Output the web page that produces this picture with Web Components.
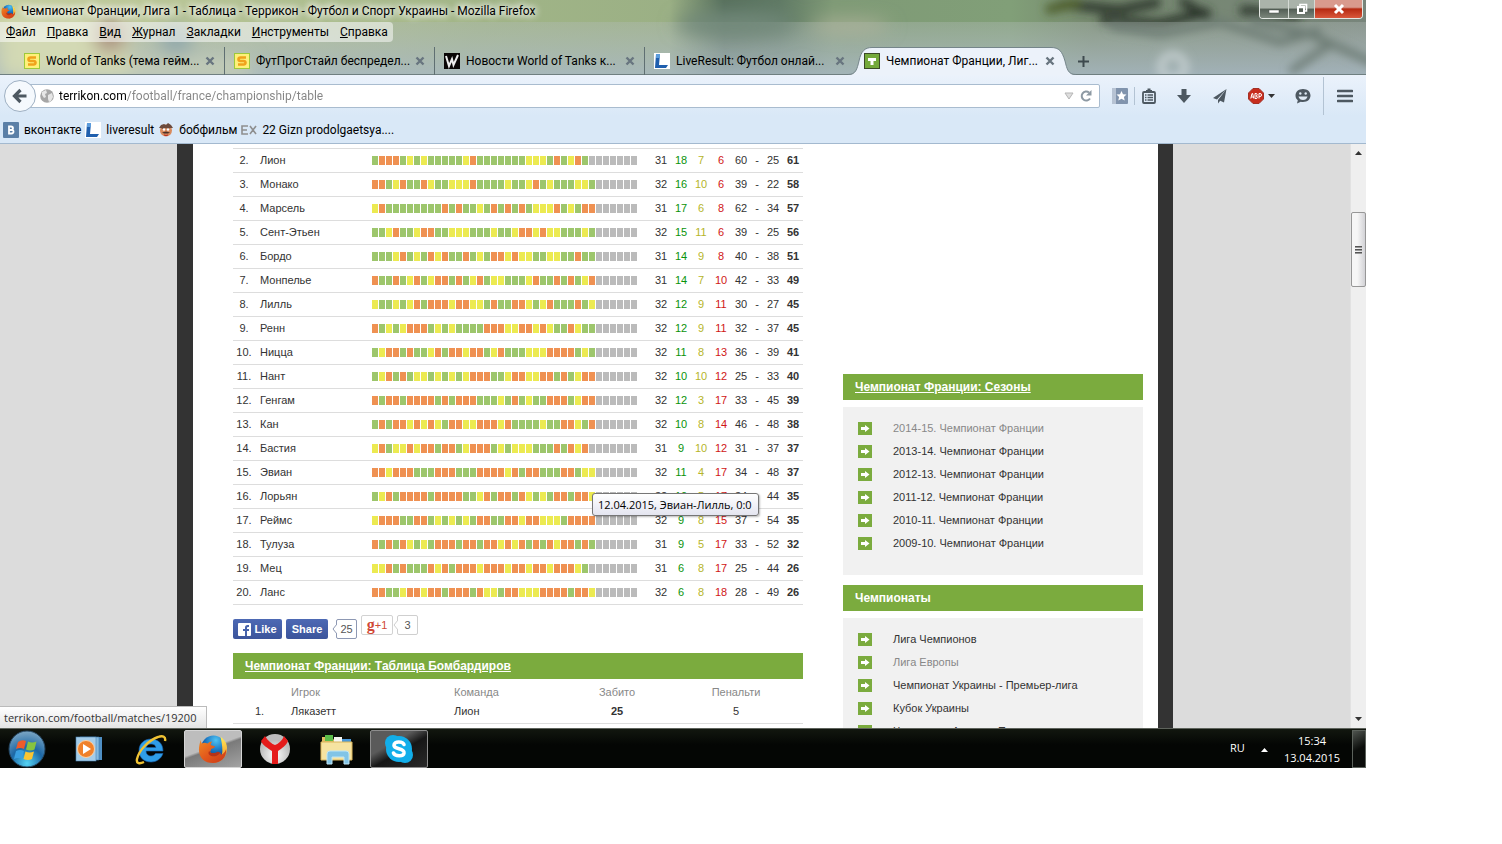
<!DOCTYPE html>
<html lang="ru">
<head>
<meta charset="utf-8">
<title>Чемпионат Франции, Лига 1 - Таблица</title>
<style>
  * { box-sizing: border-box; }
  html { height: 100%; }
  body {
    margin: 0; height: 100%;
    padding: 0 136px 76px 0;
    display: flex; flex-direction: column;
    background: #fff; color: #000; overflow: hidden;
    font: 11px "Liberation Sans", Arial, sans-serif;
    --ui: Roboto, "Open Sans", sans-serif;
    --ui-small: "Open Sans", "Noto Sans", sans-serif;
    --green: #7bab3e;
    --line: #ddd;
  }
  browser-window { flex: 1; min-height: 0; }
</style>
</head>
<body>
  <browser-window>
    <window-title slot="top">Чемпионат Франции, Лига 1 - Таблица - Террикон - Футбол и Спорт Украины - Mozilla Firefox</window-title>
    <menu-bar slot="top"></menu-bar>
    <tab-strip slot="top">
      <browser-tab icon="s">World of Tanks (тема гейм...</browser-tab>
      <browser-tab icon="s">ФутПрогСтайл беспредел...</browser-tab>
      <browser-tab icon="w">Новости World of Tanks к...</browser-tab>
      <browser-tab icon="l" last>LiveResult: Футбол онлай...</browser-tab>
      <browser-tab icon="t" active>Чемпионат Франции, Лиг...</browser-tab>
    </tab-strip>
    <nav-bar slot="bars"></nav-bar>
    <bookmark-bar slot="bars"></bookmark-bar>
    <site-page>
      <league-table></league-table>
      <social-row></social-row>
      <section-title href="#scorers">Чемпионат Франции: Таблица Бомбардиров</section-title>
      <scorer-table></scorer-table>
      <side-panel slot="aside">
        <section-title slot="title" href="#seasons">Чемпионат Франции: Сезоны</section-title>
        <side-link muted>2014-15. Чемпионат Франции</side-link>
        <side-link>2013-14. Чемпионат Франции</side-link>
        <side-link>2012-13. Чемпионат Франции</side-link>
        <side-link>2011-12. Чемпионат Франции</side-link>
        <side-link>2010-11. Чемпионат Франции</side-link>
        <side-link>2009-10. Чемпионат Франции</side-link>
      </side-panel>
      <side-panel slot="aside">
        <section-title slot="title">Чемпионаты</section-title>
        <side-link>Лига Чемпионов</side-link>
        <side-link muted>Лига Европы</side-link>
        <side-link>Чемпионат Украины - Премьер-лига</side-link>
        <side-link>Кубок Украины</side-link>
        <side-link>Чемпионат Англии - Премьер-лига</side-link>
      </side-panel>
    </site-page>
  </browser-window>
  <task-bar></task-bar>

<script>
const svg = (w, h, body, box) =>
  `<svg width="${w}" height="${h}" viewBox="${box || `0 0 ${w} ${h}`}" aria-hidden="true">${body}</svg>`;

const firefox = size => svg(size, size, `
  <defs>
    <radialGradient id="fb" cx=".6" cy=".2" r=".8"><stop offset="0" stop-color="#4fc3f2"/><stop offset=".5" stop-color="#1b78c4"/><stop offset="1" stop-color="#102f6c"/></radialGradient>
    <linearGradient id="fo" x1="0" y1="0" x2="1" y2="1"><stop offset="0" stop-color="#f08a24"/><stop offset=".5" stop-color="#e2571b"/><stop offset="1" stop-color="#c8381a"/></linearGradient>
    <linearGradient id="fy" x1="0" y1="0" x2="0" y2="1"><stop offset="0" stop-color="#ffe95a"/><stop offset="1" stop-color="#f08a1c"/></linearGradient>
  </defs>
  <circle cx="16.5" cy="14.5" r="13" fill="url(#fb)"/>
  <path d="M24 3c6 4 8 10 6.500 16C29 27 22 31 15 31c7-2 11-7 11-13 0-6-1-10-2-15z" fill="url(#fy)"/>
  <path d="M3 6c0 2 .5 3 1 4 2-1 4-1 6 0 2-1 3-2 5-2-1 2-2 3-1 4l4 1c0 2-2 2-4 3 0 2-1 2-1 3 1 3 6 3 9 1 2 0 3 1 2 2 3 0 5-3 6-6 1 9-6 15-14 15C7 31 1 25 1 17c0-4 1-8 2-11z" fill="url(#fo)"/>
  <path d="M12 18c1 3 6 3 9 1 2 0 3 1 2 2-3 3-8 4-11 1-1-1-1-3 0-4z" fill="#b5331a"/>`, '0 0 32 32');

const ICONS = {
  s: svg(16, 16, `<rect x=".5" y=".5" width="15" height="15" fill="#fdf17a" stroke="#9ec93a"/><path d="M12 4.500H6.500Q4.500 4.500 4.500 6.200t2 1.800h3q2 0 2 1.800t-2 1.700H4" fill="none" stroke="#f0a21c" stroke-width="2.600"/>`),
  w: svg(16, 16, `<rect width="16" height="16" fill="#0a0606"/><path d="M2 3l3 10 3-7 1.500 6L14 2" fill="none" stroke="#eee" stroke-width="2"/>`),
  l: svg(16, 16, `<rect width="16" height="16" fill="#fff"/><path d="M2 1h4L5 12h9l-2 3H1z" fill="#1f5fae"/><path d="M2 1h4v4H2z" fill="#5c9cdc"/>`),
  t: svg(16, 16, `<rect width="16" height="16" fill="#3b4a26"/><rect x="1" y="1" width="14" height="14" fill="#74a93a"/><path d="M4 5h8v3H9.500v4h-3V8H4z" fill="#fff"/>`),
  vk: svg(16, 16, `<rect width="16" height="16" rx="1" fill="#5b7fa6"/><path d="M6 4.500v7h2.500q2 0 2-1.900T8 8q2-.2 2-1.800T8 4.500zM6 8h2" fill="none" stroke="#fff" stroke-width="1.800"/>`),
  bob: svg(16, 16, `<circle cx="8" cy="8.500" r="6" fill="#d98a5c"/><path d="M1 6l2-3 3-1 2 1 2-2 3 2 2 3-3 0-2 1-2-1-3 1-2-1z" fill="#6b4a3c"/><path d="M4 10.500l4-1 4 1-2 1H6z" fill="#4a3028"/><circle cx="6" cy="7.500" r="1.200" fill="#fff"/><circle cx="10" cy="7.500" r="1.200" fill="#fff"/><path d="M6 13q2 1 4 0" stroke="#b3261e" fill="none"/>`),
  ex: svg(16, 16, `<path d="M7 4H1v8h6M1 8h5M9 4l6 8M15 4l-6 8" fill="none" stroke="#8e8e8e" stroke-width="1.600"/>`)
};

class Part extends HTMLElement {
  constructor() {
    super();
    this.attachShadow({ mode: 'open' });
  }

  connectedCallback() {
    this.shadowRoot.innerHTML = `
      <style>
        *, :host { box-sizing: border-box; }
        :host { display: block; }
        button { font: inherit; color: inherit; border: 0; padding: 0; background: none; }
        a { color: inherit; text-decoration: none; }
        svg { display: block; flex: none; }
      </style>
      ${this.render()}`;
  }
}

// Окно браузера: стеклянный верх, панели, страница с полосой прокрутки
class BrowserWindow extends Part {
  render() {
    return `
      <style>
        :host { display: flex; flex-direction: column; background: #dcdcdc; }
        .glass { position: relative; background: #a3b0a2; font: 12px var(--ui); }
        .glass > svg { position: absolute; inset: 0; width: 100%; height: 100%; }
        .bars { background: linear-gradient(#ebf2fb, #d9e8f7 60%); border-bottom: 1px solid #a3b9cf; font: 12px var(--ui); }
        .view { position: relative; flex: 1; min-height: 0; display: flex; }
        .page { flex: 1; min-width: 0; overflow: hidden; }
        .status {
          position: absolute; left: 0; bottom: 0; height: 22px; padding: 0 10px 0 4px;
          border: 1px solid #bbb; border-width: 1px 1px 0 0;
          background: linear-gradient(#fff, #e4e4e4); color: #333; font: 11px/21px var(--ui-small);
        }
        .tip {
          position: absolute; left: 592px; top: 349px; height: 23px; padding: 0 6px 0 5px;
          border: 1px solid #767676; border-radius: 3px;
          background: linear-gradient(#fff, #e4e5f0); font: 11px/22px var(--ui-small);
          box-shadow: 1px 1px 2px #0004;
        }
      </style>
      <div class="glass">
        <svg viewBox="0 0 1366 75" preserveAspectRatio="none" aria-hidden="true">
          <defs>
            <filter id="b" x="-20%" y="-50%" width="140%" height="200%"><feGaussianBlur stdDeviation="9"/></filter>
            <filter id="c" x="-20%" y="-50%" width="140%" height="200%"><feGaussianBlur stdDeviation="5"/></filter>
            <linearGradient id="g"><stop offset="0" stop-color="#c6cf9f"/><stop offset=".35" stop-color="#a1b587"/><stop offset=".49" stop-color="#9bb085"/><stop offset=".53" stop-color="#566f5c"/><stop offset=".57" stop-color="#5f7964"/><stop offset=".61" stop-color="#7f9a76"/><stop offset=".74" stop-color="#819f78"/><stop offset=".8" stop-color="#76896f"/><stop offset="1" stop-color="#78857b"/></linearGradient>
            <linearGradient id="h" x2="0" y2="1"><stop offset="0" stop-color="#b3bdba" stop-opacity=".35"/><stop offset="1" stop-color="#a9b9c4" stop-opacity=".85"/></linearGradient>
          </defs>
          <rect width="1366" height="75" fill="url(#g)"/>
          <g filter="url(#c)" fill="none" stroke="#2c352a" stroke-width="9">
            <path d="M1060 4l60 6 40-8M1100 20l60 4 50-12M1180 0l30 18M1240 10l60 6"/>
            <path d="M1046 10l34-8" stroke="#4d5d2b"/>
          </g>
          <rect y="22" width="1366" height="53" fill="url(#h)"/>
          <g filter="url(#b)">
            <rect x="0" y="18" width="130" height="60" fill="#d3d9b4"/>
            <ellipse cx="110" cy="36" rx="16" ry="18" fill="#ab9280"/>
            <ellipse cx="176" cy="42" rx="16" ry="16" fill="#93a9ac"/>
            <rect x="130" y="58" width="120" height="20" fill="#c5cdb6"/>
            <ellipse cx="735" cy="24" rx="60" ry="12" fill="#72897a"/>
            <ellipse cx="850" cy="26" rx="40" ry="6" fill="#b1b49c"/>
          </g>
          <g filter="url(#c)" fill="none" stroke="#6b7972" stroke-width="7">
            <path d="M1110 26l50 8 60-12 60 20 40-12M1250 20l60 14 66 30M1330 44l-40 28"/>
            <circle cx="1173" cy="67" r="12" stroke="#c5cfd0" stroke-width="7"/>
          </g>
          <rect y="74" width="1366" height="1" fill="#6f7f80"/>
        </svg>
        <slot name="top"></slot>
      </div>
      <div class="bars"><slot name="bars"></slot></div>
      <div class="view">
        <div class="page"><slot></slot></div>
        <scroll-track></scroll-track>
        <div class="tip" role="tooltip">12.04.2015, Эвиан-Лилль, 0:0</div>
        <div class="status">terrikon.com/football/matches/19200</div>
      </div>`;
  }
}

class ScrollTrack extends Part {
  render() {
    return `
      <style>
        :host { width: 16px; flex: none; display: flex; flex-direction: column; align-items: center; background: #efefef; border-left: 1px solid #e2e2e2; }
        svg { margin: 6px 0; }
        .gap { height: 50px; }
        .thumb {
          width: 15px; height: 75px; border: 1px solid #979797; border-radius: 2px;
          background: linear-gradient(90deg, #f6f6f6 40%, #d2d2d6);
          display: flex; flex-direction: column; justify-content: center; align-items: center; gap: 1px;
        }
        .thumb i { width: 7px; height: 2px; background: #555; border-bottom: 1px solid #999; }
        .rest { flex: 1; }
      </style>
      ${svg(7, 6, '<path d="M0 5l3.500-4L7 5z" fill="#333"/>')}
      <div class="gap"></div>
      <div class="thumb"><i></i><i></i><i></i></div>
      <div class="rest"></div>
      ${svg(7, 6, '<path d="M0 1h7L3.500 5z" fill="#333"/>')}`;
  }
}

class WindowTitle extends Part {
  render() {
    return `
      <style>
        :host { position: relative; height: 22px; display: flex; align-items: center; padding-left: 1px; }
        .text { margin-left: 5px; white-space: nowrap; text-shadow: 0 0 6px #fff, 0 0 8px #fff, 0 0 10px #fff; }
        .controls { margin: 0 3px 0 auto; align-self: flex-start; display: flex; border: 1px solid #e4e8e4; border-top: 0; border-radius: 0 0 4px 4px; overflow: hidden; }
        button { height: 18px; width: 29px; display: grid; place-items: center; border-right: 1px solid #d5dad5; background: linear-gradient(#aab3aa 45%, #535e55 50%, #7b867c); }
        button.r { width: 26px; }
        button.x { width: 47px; border: 0; background: linear-gradient(#d99a8d 40%, #b62a12 50%, #d9583c); }
      </style>
      ${firefox(15)}
      <span class="text"><slot></slot></span>
      <div class="controls">
        <button aria-label="Свернуть">${svg(12, 12, '<rect x="1" y="7" width="10" height="3" fill="#fff" stroke="#4a524b" stroke-width=".5"/>')}</button>
        <button class="r" aria-label="Развернуть">${svg(12, 12, '<path d="M4 4V1.500h6.500V8H8" fill="none" stroke="#fff" stroke-width="1.600"/><rect x="2" y="4" width="6" height="6" fill="none" stroke="#fff" stroke-width="2"/>')}</button>
        <button class="x" aria-label="Закрыть">${svg(12, 12, '<path d="M2 2l8 8M10 2l-8 8" stroke="#fff" stroke-width="3"/>')}</button>
      </div>`;
  }
}

class MenuBar extends Part {
  render() {
    const items = ['Файл', 'Правка', 'Вид', 'Журнал', 'Закладки', 'Инструменты', 'Справка'];
    return `
      <style>
        :host { position: relative; height: 20px; display: flex; }
        nav { display: flex; gap: 11px; padding: 0 5px 0 6px; background: #ffffff80; border-radius: 0 4px 4px 0; }
        button { line-height: 20px; }
        u { text-underline-offset: 1px; }
      </style>
      <nav>${items.map(t => `<button><u>${t[0]}</u>${t.slice(1)}</button>`).join('')}</nav>`;
  }
}

class TabStrip extends Part {
  render() {
    return `
      <style>
        :host { position: relative; height: 33px; padding: 5px 0 0 15px; display: flex; }
        button { width: 36px; display: grid; place-items: center; }
      </style>
      <slot></slot>
      <button aria-label="Новая вкладка">${svg(11, 11, '<path d="M5.500 0v11M0 5.500h11" stroke="#3e4a4e" stroke-width="2"/>')}</button>`;
  }
}

class BrowserTab extends Part {
  render() {
    const active = this.hasAttribute('active');
    const edge = active || this.hasAttribute('last') ? 'transparent' : '#5f6f72';
    return `
      <style>
        :host { position: relative; flex: 0 1 210px; min-width: 0; height: 28px; display: flex; align-items: center; gap: 6px; padding: 0 8px 0 9px; border-right: 1px solid ${edge}; }
        .shape { position: absolute; left: -7px; top: 0; }
        .icon, .label, button { position: relative; }
        .label { flex: 1; min-width: 0; white-space: nowrap; }
      </style>
      ${active ? `<svg class="shape" width="228" height="28" aria-hidden="true"><path d="M0 28C8 28 9 22 11 14 13 4 17 .5 24 .5H203C211 .5 214 4 217 14 219 22 220 28 228 28z" fill="#ecf2fa"/><path d="M0 27.500C8 27.500 9 22 11 14 13 4 17 .5 24 .5H203C211 .5 214 4 217 14 219 22 220 27.500 228 27.500" fill="none" stroke="#75858a"/></svg>` : ''}
      <span class="icon">${ICONS[this.getAttribute('icon')]}</span>
      <span class="label" role="tab" aria-selected="${active}"><slot></slot></span>
      <button aria-label="Закрыть вкладку">${svg(12, 12, '<path d="M2.500 2.500l7 7M9.500 2.500l-7 7" stroke="#68757f" stroke-width="2.400"/>')}</button>`;
  }
}

class NavBar extends Part {
  render() {
    const dark = '#4d5861';
    return `
      <style>
        :host { display: flex; align-items: center; height: 42px; padding-left: 4px; }
        button { display: flex; align-items: center; justify-content: center; gap: 4px; height: 32px; }
        .back { position: relative; width: 32px; border: 1px solid #9eb0c3; border-radius: 50%; background: #f5f9fd; flex: none; }
        .url { flex: 1; height: 24px; margin: 0 6px 0 -12px; padding: 0 6px 0 15px; display: flex; align-items: center; gap: 5px; background: #fff; border: 1px solid #a9bccf; border-radius: 2px; }
        input {
          flex: 1; min-width: 0; border: 0; padding: 0; outline: 0; height: 20px; font: 12px/20px var(--ui);
          color: transparent; background: linear-gradient(90deg, #000 68px, #858585 68px); -webkit-background-clip: text; background-clip: text;
        }
        .w28 { width: 28px; } .w30 { width: 30px; } .w42 { width: 42px; } .w53 { width: 53px; }
        .sep { width: 1px; height: 18px; background: #b3c3d3; }
        .tall { height: 38px; margin-left: 5px; }
      </style>
      <button class="back" aria-label="Назад">${svg(16, 16, `<path d="M14.500 8H3M8.500 2L2.500 8l6 6" fill="none" stroke="${dark}" stroke-width="3.200"/>`)}</button>
      <div class="url">
        ${svg(14, 14, '<circle cx="7" cy="7" r="6.800" fill="#a6a6a6"/><path d="M2 3l4-2 1 3-2 1 1 3-2 1-2-3zM8 6l4-2 1 4-2 4-2 1-1-3z" fill="#e6e6e6"/>')}
        <input aria-label="Адрес" value="terrikon.com/football/france/championship/table">
        ${svg(10, 8, '<path d="M1 1h8L5 7z" fill="#dedede" stroke="#b5b5b5"/>')}
        ${svg(14, 14, '<path d="M11 9.500A4.500 4.500 0 1 1 10 3.500" fill="none" stroke="#8d99a3" stroke-width="2"/><path d="M12.500 1v5.500H7z" fill="#8d99a3"/>')}
      </div>
      <button class="w28" aria-label="Закладки">${svg(16, 16, '<rect width="16" height="16" rx="1" fill="#8194ad"/><rect width="4" height="16" fill="#b7c3d3"/><path d="M9.500 3l1.500 3.300 3.500.3-2.600 2.400.8 3.600-3.200-1.900-3.200 1.900.8-3.600L4.500 6.600 8 6.300z" fill="#fff"/>')}</button>
      <i class="sep"></i>
      <button class="w28" aria-label="Список">${svg(16, 16, `<rect x="2" y="4" width="12" height="11" rx="1" fill="none" stroke="${dark}" stroke-width="1.800"/><path d="M5 4V2h1.500V.500h3V2H11v2z" fill="${dark}"/><path d="M4 7h1.500M6.500 7H12M4 9.500h1.500M6.500 9.500H12M4 12h1.500M6.500 12H12" stroke="${dark}" stroke-width="1.500"/>`)}</button>
      <button class="w42" aria-label="Загрузки">${svg(16, 16, `<path d="M5.500 1h5v6H15l-7 8-7-8h4.500z" fill="${dark}"/>`)}</button>
      <button class="w30" aria-label="Отправить">${svg(16, 16, `<path d="M14.500 1L1 10l4 1.500zM14.500 1L6 12v3.500l2.200-2.700 3.800 1.700z" fill="${dark}"/>`)}</button>
      <button class="w53" aria-label="Adblock Plus">
        ${svg(16, 16, '<path d="M5 .5h6L15.500 5v6L11 15.500H5L.5 11V5z" fill="#c72d1e" stroke="#a33126"/><path d="M2.800 10.500L4 5.500h.6l1.200 5M3.200 9h2M7 10.500v-5h1q1.200 0 1.200 1.200T8 8q1.400 0 1.400 1.300T8 10.500zM11 10.500v-5h1q1.500 0 1.500 1.500T12 8.500h-1" fill="none" stroke="#fff"/>')}
        ${svg(7, 5, '<path d="M0 0h7L3.500 4z" fill="#333"/>')}
      </button>
      <button class="w30" aria-label="Чат">${svg(16, 16, `<path d="M8 1c4.500 0 7.500 2.800 7.500 6.500S12.500 14 8 14c-.8 0-1.500 0-2.200-.3L2 15.500l.8-3.200C1.300 11 .5 9.500.5 7.500.5 3.800 3.500 1 8 1z" fill="${dark}"/><circle cx="5.300" cy="5.500" r="1.200" fill="#dfeaf5"/><circle cx="10.700" cy="5.500" r="1.200" fill="#dfeaf5"/><path d="M3.500 8.500h9q-1 3.500-4.500 3.500T3.500 8.500z" fill="#dfeaf5"/>`)}</button>
      <i class="sep tall"></i>
      <button class="w42" aria-label="Меню">${svg(16, 14, `<path d="M1 2h14M1 7h14M1 12h14" stroke="${dark}" stroke-width="2.600" stroke-linecap="round"/>`)}</button>`;
  }
}

class BookmarkBar extends Part {
  render() {
    const items = [['vk', 'вконтакте'], ['l', 'liveresult'], ['bob', 'бобфильм'], ['ex', '22 Gizn prodolgaetsya....']];
    return `
      <style>
        :host { display: flex; align-items: center; gap: 4px; height: 26px; padding-left: 3px; }
        a { display: flex; align-items: center; gap: 5px; }
      </style>
      ${items.map(([icon, text]) => `<a href="#">${ICONS[icon]}${text}</a>`).join('')}`;
  }
}

// Страница сайта: колонка с таблицами и боковая колонка
class SitePage extends Part {
  render() {
    return `
      <style>
        :host { max-width: 996px; margin: 0 auto; min-height: 100%; background: #fff; border: solid #333; border-width: 0 15px 0 16px; color: #333; }
        .cols { display: grid; grid-template-columns: 1fr 300px; gap: 40px; padding: 4px 15px 0 40px; }
        aside { padding-top: 226px; }
      </style>
      <div class="cols">
        <main><slot></slot></main>
        <aside><slot name="aside"></slot></aside>
      </div>`;
  }
}

class SectionTitle extends Part {
  render() {
    const href = this.getAttribute('href');
    return `
      <style>
        h2 { margin: 0; height: 26px; padding-left: 12px; background: var(--green); color: #fff; font: bold 12px/26px "Liberation Sans", Arial, sans-serif; }
        a { text-decoration: underline; }
      </style>
      <h2>${href ? `<a href="${href}"><slot></slot></a>` : '<slot></slot>'}</h2>`;
  }
}

class SidePanel extends Part {
  render() {
    return `
      <style>
        :host { margin-bottom: 10px; }
        .list { margin-top: 7px; padding: 10px 15px 20px; background: #f1f1f1; }
      </style>
      <slot name="title"></slot>
      <div class="list"><slot></slot></div>`;
  }
}

class SideLink extends Part {
  render() {
    return `
      <style>
        a { display: flex; align-items: center; gap: 21px; height: 23px; color: ${this.hasAttribute('muted') ? '#888' : '#333'}; }
        span { padding-bottom: 2px; }
      </style>
      <a href="#">${svg(14, 13, '<rect width="14" height="13" fill="#7bab3e"/><path d="M3 5h4V3l4.500 3.500L7 10V8H3z" fill="#fff"/>')}<span><slot></slot></span></a>`;
  }
}

// g - победа, y - ничья, o - поражение; остальное до 38 туров серое
const TEAMS = [
  ['Лион', 'gooogygygggggyogggggggyyygogyog', 31, 18, 7, 6, 60, 25, 61],
  ['Монако', 'oogyoggoyggyyyoggggyggyogygggyyg', 32, 16, 10, 6, 39, 22, 58],
  ['Марсель', 'yoggggggggogoggygogogogyyyogygoo', 31, 17, 6, 8, 62, 34, 57],
  ['Сент-Этьен', 'ggyoggyooggyyygggyggyooyoyygggyg', 32, 15, 11, 6, 39, 25, 56],
  ['Бордо', 'gggyogygoyoggogygooyoyyggyyggogg', 31, 14, 9, 8, 40, 38, 51],
  ['Монпелье', 'oggogyogyoogogyogyygggyoggogogyo', 31, 14, 7, 10, 42, 33, 49],
  ['Лилль', 'yggygyogoooyooyygoggooygyogggogy', 32, 12, 9, 11, 30, 27, 45],
  ['Ренн', 'ogygyooogygyggggoooyyooyoyggoygg', 32, 12, 9, 11, 32, 37, 45],
  ['Ницца', 'gyoogoggyogooyoogyogggyyyoooogyg', 32, 11, 8, 13, 36, 39, 41],
  ['Нант', 'gyogogyygygygyoooggyooyyoogogyoo', 32, 10, 10, 12, 25, 33, 40],
  ['Генгам', 'ogoogoooogogooogggygogyggooogyoo', 32, 12, 3, 17, 33, 45, 39],
  ['Кан', 'gogooyoyoygooyyoooyoggggyggooygo', 32, 10, 8, 14, 46, 48, 38],
  ['Бастия', 'yogyyoyoogoogyooogygyyygggogoyo', 31, 9, 10, 12, 31, 37, 37],
  ['Эвиан', 'ooyooogggooogggooooyogoogggoogyy', 32, 11, 4, 17, 34, 48, 37],
  ['Лорьян', 'gyogoooogooooggyogoogoygygoogooy', 32, 10, 5, 17, 34, 44, 35],
  ['Реймс', 'yoooggoogygygygooggooyooyyygoooo', 32, 9, 8, 15, 37, 54, 35],
  ['Тулуза', 'ogogoygygooogoogooyoyogogoyoogog', 31, 9, 5, 17, 33, 52, 32],
  ['Мец', 'yyogogggoyogoooyoooyooyooyoooyg', 31, 6, 8, 17, 25, 44, 26],
  ['Ланс', 'ooggyooyoogooogoyygooyyyoooogooy', 32, 6, 8, 18, 28, 49, 26]
];

class LeagueTable extends Part {
  render() {
    const rows = TEAMS.map(([name, form, played, w, d, l, scored, missed, points], i) => `
      <tr>
        <td>${i + 2}.</td>
        <td class="name"><a href="#">${name}</a></td>
        <td class="tours"><div class="form">${[...form.padEnd(38, 'n')].map(r => `<i class="${r}"></i>`).join('')}</div></td>
        <td>${played}</td><td class="w">${w}</td><td class="d">${d}</td><td class="l">${l}</td>
        <td>${scored}</td><td>-</td><td>${missed}</td><td><b>${points}</b></td>
      </tr>`).join('');
    return `
      <style>
        table { width: 100%; table-layout: fixed; border-collapse: separate; border-spacing: 0; border-top: 1px solid var(--line); font-size: 11px; }
        td { height: 24px; padding: 0 0 2px; text-align: center; border-bottom: 1px solid var(--line); }
        .name { text-align: left; padding-left: 5px; }
        .tours { padding: 0; }
        .form { display: flex; gap: 1px; }
        .form i { width: 6px; height: 9px; background: #bbb; }
        .form .g { background: #9dc66c; }
        .form .o { background: #ef9152; }
        .form .y { background: #ecea51; }
        .w { color: #0a930a; } .d { color: #b5b52a; } .l { color: #d01616; }
      </style>
      <table>
        <colgroup>
          <col style="width:22px"><col style="width:117px"><col>
          <col style="width:20px"><col style="width:20px"><col style="width:20px"><col style="width:20px">
          <col style="width:20px"><col style="width:12px"><col style="width:20px"><col style="width:20px">
        </colgroup>
        <tbody>${rows}</tbody>
      </table>`;
  }
}

class SocialRow extends Part {
  render() {
    const bubble = (n, color) => `<span class="bubble">${svg(5, 10, `<path d="M5 0L1 5l4 5" fill="#fff" stroke="${color}"/>`)}<span class="n" style="border-color:${color}">${n}</span></span>`;
    return `
      <style>
        :host { display: flex; gap: 4px; height: 48px; padding-top: 10px; }
        .group { display: flex; height: 20px; }
        .fb { margin-top: 4px; gap: 4px; }
        .fb button { width: 49px; display: flex; align-items: center; justify-content: center; gap: 3px; border-radius: 2px; color: #fff; font-weight: bold; background: linear-gradient(#4d69b4, #3b549b); }
        .fb button + button { width: 42px; }
        .plus { width: 32px; border: 1px solid #d2d2d2; border-radius: 2px; color: #d14836; display: flex; align-items: center; justify-content: center; }
        .plus b { font: bold 16px/16px "Liberation Serif", serif; }
        .bubble { display: flex; align-items: center; }
        .bubble svg { margin-right: -1px; position: relative; }
        .n { width: 21px; height: 20px; border: 1px solid; border-radius: 2px; text-align: center; line-height: 18px; color: #555; }
      </style>
      <div class="group fb">
        <button>${svg(13, 13, '<rect width="13" height="13" rx="1" fill="#fff"/><path d="M9 13V8h2V6H9V5q0-1 1-1h1V2H9.500Q7 2 7 4.500V6H5v2h2v5z" fill="#4662ab"/>')}Like</button>
        <button>Share</button>
        ${bubble(25, '#8d98b3')}
      </div>
      <div class="group">
        <button class="plus"><b>g</b>+1</button>
        ${bubble(3, '#cfcfcf')}
      </div>`;
  }
}

class ScorerTable extends Part {
  render() {
    return `
      <style>
        table { width: 100%; table-layout: fixed; border-spacing: 0; font-size: 11px; }
        th { height: 22px; padding: 4px 0 0; font-weight: normal; color: #888; }
        td { height: 23px; padding: 0 0 3px; border-bottom: 1px solid var(--line); }
        th, td { text-align: center; }
        .left { text-align: left; padding-left: 5px; }
      </style>
      <table>
        <colgroup><col style="width:53px"><col style="width:163px"><col><col style="width:104px"><col style="width:134px"></colgroup>
        <thead><tr><th></th><th class="left">Игрок</th><th class="left">Команда</th><th>Забито</th><th>Пенальти</th></tr></thead>
        <tbody><tr><td>1.</td><td class="left">Ляказетт</td><td class="left">Лион</td><td><b>25</b></td><td>5</td></tr></tbody>
      </table>`;
  }
}

class TaskBar extends Part {
  render() {
    const apps = [
      ['Проигрыватель', '', svg(28, 28, '<path d="M8 2h19v23H8z" fill="#4f8fc4"/><path d="M5 2h19v23H5z" fill="#85bbe0" stroke="#3c78ab" stroke-width=".6"/><rect x="1" y="2" width="20" height="24" fill="#a5cde9" stroke="#4a83b4" stroke-width=".6"/><circle cx="11" cy="14" r="8.500" fill="#f0812a" stroke="#fbd2a6"/><path d="M8 9l8 5-8 5z" fill="#fff"/>')],
      ['Internet Explorer', '', svg(32, 32, '<path d="M28 18H11c0 3.500 2.500 5 5 5 2 0 3.500-1 4.500-2.500H28C26 26 21.500 29 16 29 9 29 4 24.500 4 17.500S9.500 6 16 6s12 4 12 12zM11.300 14.500H21C20.500 12 18.500 11 16 11s-4.200 1.200-4.700 3.500z" fill="#2f9de8" stroke="#1760ac" stroke-width=".6"/><path d="M30 8c1-4-2-6-7-4C14 7 4 17 2 26c-1 5 3 5 7 3" fill="none" stroke="#f0c233" stroke-width="2.400"/>')],
      ['Firefox', 'front', firefox(30)],
      ['Яндекс', '', svg(32, 32, '<defs><radialGradient id="ya" cx=".5" cy=".7"><stop offset="0" stop-color="#fff"/><stop offset="1" stop-color="#bcbcbc"/></radialGradient></defs><circle cx="16" cy="16" r="15" fill="url(#ya)"/><path d="M2 8l4-5c3 5 7 8 10 9 3-1 7-4 9-9l4 5c-2 5-6 7-10 10v13h-6V18C9 15 4 13 2 8z" fill="#e51b1b"/>')],
      ['Проводник', '', svg(34, 32, '<path d="M2 4h10l2 3h17v20H2z" fill="#e0bd63"/><path d="M5 2h8v6H5z" fill="#5bbd4a"/><path d="M14 4h8v5h-8z" fill="#f7f7f2"/><path d="M22 6h9v5h-9z" fill="#4a99da"/><path d="M1 9h31v18H1z" fill="#f6e3a1" stroke="#d9b55c"/><path d="M7 31V21q0-3 3-3h16q3 0 3 3v10h-5v-7H12v7z" fill="#82c4e6" stroke="#bfe6f6"/>')],
      ['Skype', 'open', svg(30, 30, '<circle cx="9" cy="9" r="8" fill="#12aeea"/><circle cx="21" cy="21" r="8" fill="#12aeea"/><circle cx="15" cy="15" r="13" fill="#12aeea"/><path d="M20 10.500c-1-3-10-4-10 .8C10 16 20.500 13.500 20 19 19.500 23 11 22.500 9.500 19" fill="none" stroke="#fff" stroke-width="3.600" stroke-linecap="round"/>')]
    ];
    return `
      <style>
        :host { display: flex; flex: none; height: 40px; gap: 4px; padding-top: 1px; background: linear-gradient(#12170f, #040604 40%); border-top: 1px solid #5e635c; color: #fff; font: 11px var(--ui-small); }
        button { width: 58px; display: grid; place-items: center; }
        .start { width: 56px; padding-right: 2px; }
        .front { border: 1px solid #d5d5d5; border-radius: 2px; background: linear-gradient(160deg, #bdbdbd 45%, #7a7a7a 50%, #a3a3a3); }
        .open { border: 1px solid #8d8d8d; border-radius: 2px; background: linear-gradient(150deg, #5a5a5a 35%, #161616 55%, #292929); }
        .tray { margin-left: auto; display: flex; align-items: center; }
        .lang { padding-bottom: 4px; }
        .up { width: 7px; margin: 0 16px; padding-top: 2px; }
        .clock { text-align: center; line-height: 17px; margin-right: 8px; }
        .desk { width: 14px; border: 1px solid #5c625c; background: linear-gradient(150deg, #4f544f, #0b0d0b 50%); }
      </style>
      <button class="start" aria-label="Пуск">${svg(38, 38, '<defs><radialGradient id="orb" cx=".5" cy=".9" r=".9"><stop offset="0" stop-color="#54d3f4"/><stop offset=".5" stop-color="#1c67a5"/><stop offset="1" stop-color="#7da7c4"/></radialGradient></defs><circle cx="19" cy="19" r="18" fill="url(#orb)" stroke="#24445e"/><path d="M10 12q4-3 8-1l-2 8q-4-2-8 0z" fill="#ee5b2a"/><path d="M20 11.500q4 2 8.500 0l-2 8q-4 2-8.500 0z" fill="#86c440"/><path d="M8 21q4-2 8 0l-2 8q-3.500-2-8 0z" fill="#3a9fe0"/><path d="M17.500 21.500q4 2 8.500 0l-2 7.500q-4 2-8.500 0z" fill="#fbc531"/>')}</button>
      ${apps.map(([name, state, icon]) => `<button class="${state}" aria-label="${name}">${icon}</button>`).join('')}
      <div class="tray">
        <span class="lang">RU</span>
        <span class="up">${svg(7, 4, '<path d="M0 4l3.500-4L7 4z" fill="#fff"/>')}</span>
        <div class="clock">15:34<br>13.04.2015</div>
      </div>
      <button class="desk" aria-label="Показать рабочий стол"></button>`;
  }
}

customElements.define('browser-window', BrowserWindow);
customElements.define('scroll-track', ScrollTrack);
customElements.define('window-title', WindowTitle);
customElements.define('menu-bar', MenuBar);
customElements.define('tab-strip', TabStrip);
customElements.define('browser-tab', BrowserTab);
customElements.define('nav-bar', NavBar);
customElements.define('bookmark-bar', BookmarkBar);
customElements.define('site-page', SitePage);
customElements.define('section-title', SectionTitle);
customElements.define('side-panel', SidePanel);
customElements.define('side-link', SideLink);
customElements.define('league-table', LeagueTable);
customElements.define('social-row', SocialRow);
customElements.define('scorer-table', ScorerTable);
customElements.define('task-bar', TaskBar);
</script>
</body>
</html>
